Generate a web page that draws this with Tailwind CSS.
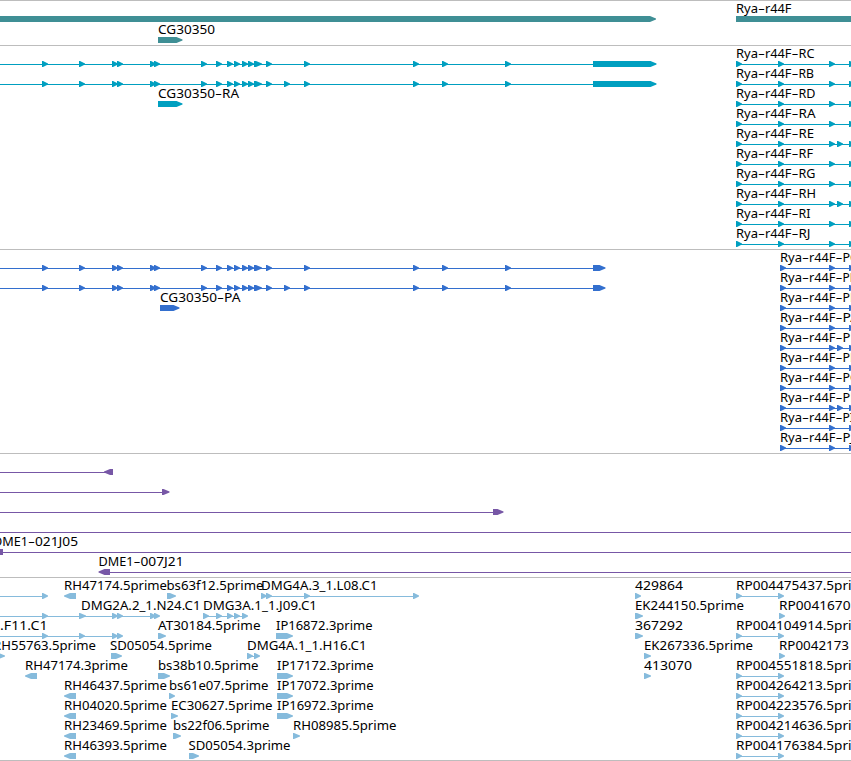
<!DOCTYPE html>
<html lang="en">
<head>
    <meta charset="UTF-8">
    <meta name="viewport" content="width=device-width, initial-scale=1.0">
    <title>Genome Browser</title>
    <script src="https://cdn.jsdelivr.net/npm/@tailwindcss/browser@4"></script>
</head>
<body class="bg-white overflow-hidden">
    <main class="flex flex-col w-full h-[761px] overflow-hidden border-b border-[#bdbdbd] font-['Noto_Sans','DejaVu_Sans',sans-serif] text-[12px] text-black">
        <!-- Genes -->
        <section id="genes" class="h-[45px] shrink-0 border-t border-[#bdbdbd] text-[#3f8f95]"></section>
        <!-- Transcripts -->
        <section id="transcripts" class="h-[204px] shrink-0 border-t border-[#bdbdbd] text-[#009fc0]"></section>
        <!-- Proteins -->
        <section id="proteins" class="h-[204px] shrink-0 border-t border-[#bdbdbd] text-[#336fce]"></section>
        <!-- BACs -->
        <section id="bacs" class="h-[124px] shrink-0 border-t border-[#bdbdbd] text-[#7757a6]"></section>
        <!-- ESTs -->
        <section id="ests" class="h-[183px] shrink-0 border-t border-[#bdbdbd] text-[#86bbdc]"></section>
    </main>

    <script>
        // Every row is { labels: [text, x, width(s)], lines: [x1, x2], arrows: [x1, x2, 'left'?] }
        // A label with dashes takes one width for each part between them
        const exons = [42, 79, 112, 117, 150, 154, 201, 216, 227, 234, 242, 248, [254, 262], 266, 304, 413, 442, 505];
        const exonsLong = exons.concat([284]);

        const genes = [
            { labels: [['Rya-r44F', 736, [22, 26.5]]], arrows: [[-10, 656], [736, 870]] },
            { labels: [['CG30350', 158, 57]], arrows: [[158, 182.5]] }
        ];

        // Rya-r44F isoforms: letter, width of the last label part
        const isoforms = [['C', 16], ['B', 15.5], ['D', 17], ['A', 17], ['E', 15.5], ['F', 14.5], ['G', 17], ['H', 17.5], ['I', 12], ['J', 12]];

        const transcripts = isoforms.map(([c, w]) => ({
            labels: [['Rya-r44F-R' + c, 736, [22, 26.5, w]]],
            lines: [[736, 851]],
            arrows: [736, 778, 829, 849].concat(c === 'E' || c === 'H' ? [837] : [])
        }));
        const proteins = isoforms.map(([c, w]) => ({
            labels: [['Rya-r44F-P' + c, 780, [22, 26.5, w - 0.5]]],
            lines: [[780, 851]],
            arrows: [780, 829, 849].concat(c === 'E' || c === 'H' ? [837] : [])
        }));
        [exons, exonsLong].forEach((list, i) => {
            transcripts[i].lines.push([0, 593]);
            transcripts[i].arrows.push(...list, [593, 656.5]);
            proteins[i].lines.push([0, 593]);
            proteins[i].arrows.push(...list, [593, 605.5]);
        });
        transcripts[2].labels.push(['CG30350-RA', 158, [57, 17]]);
        transcripts[2].arrows.push([158, 182.5]);
        proteins[2].labels.push(['CG30350-PA', 160, [57, 16.5]]);
        proteins[2].arrows.push([160, 179.5]);

        const bacs = [
            { lines: [[0, 106]], arrows: [[104, 113, 'left']] },
            { lines: [[0, 163]], arrows: [[162, 169.5]] },
            { lines: [[0, 494]], arrows: [[493, 503.5]] },
            { lines: [[0, 851]] },
            { labels: [['DME1-021J05', -7, [35, 43]]], lines: [[0, 851]], arrows: [[-8, 3, 'left']] },
            { labels: [['DME1-007J21', 98.5, [35, 43]]], lines: [[108, 851]], arrows: [[98.5, 110, 'left']] }
        ];

        const ests = [
            {
                labels: [['RH47174.5prime', 64, 103], ['bs63f12.5prime', 166.5, 97], ['DMG4A.3_1.L08.C1', 261, 116.5], ['429864', 635, 48], ['RP004475437.5prime', 736, 136]],
                lines: [[0, 42], [261, 413], [736, 778]],
                arrows: [42, [64, 76, 'left'], [167, 176], 261, 266, 304, 413, [635, 641], 736, 778]
            },
            {
                labels: [['DMG2A.2_1.N24.C1', 81, 119.5], ['DMG3A.1_1.J09.C1', 203, 114], ['EK244150.5prime', 635, 109], ['RP0041670', 779, 71.5]],
                lines: [[0, 154], [203, 242]],
                arrows: [42, [79, 86], 112, 117, 150, 154, 203, 216, 227, 234, 242, [635, 643], 779]
            },
            {
                labels: [['.F11.C1', 0, 47.5], ['AT30184.5prime', 158, 102.5], ['IP16872.3prime', 276, 96.5], ['367292', 635, 48], ['RP004104914.5prime', 736, 136]],
                lines: [[0, 117], [736, 778]],
                arrows: [42, 79, 112, 117, [158, 166], [276, 293], [635, 643], 736, 778]
            },
            {
                labels: [['RH55763.5prime', -7, 103], ['SD05054.5prime', 110, 102], ['DMG4A.1_1.H16.C1', 247, 119.5], ['EK267336.5prime', 644, 109], ['RP0042173', 779, 70]],
                lines: [[250, 256]],
                arrows: [[-6, 5], [111, 122], [247, 253], 254, [644, 651], 779]
            },
            {
                labels: [['RH47174.3prime', 25, 103], ['bs38b10.5prime', 158, 100.5], ['IP17172.3prime', 277, 96.5], ['413070', 644, 48], ['RP004551818.5prime', 736, 136]],
                lines: [[736, 778]],
                arrows: [[25, 37, 'left'], [158, 170], [277, 293], [644, 651], 736, 778]
            },
            {
                labels: [['RH46437.5prime', 64, 103], ['bs61e07.5prime', 169, 99.5], ['IP17072.3prime', 277, 96.5], ['RP004264213.5prime', 736, 136]],
                lines: [[736, 778]],
                arrows: [[64, 76, 'left'], 169, [277, 293], 736, 778]
            },
            {
                labels: [['RH04020.5prime', 64, 103], ['EC30627.5prime', 171, 101.5], ['IP16972.3prime', 277, 96.5], ['RP004223576.5prime', 736, 136]],
                lines: [[736, 778]],
                arrows: [[64, 76, 'left'], [171, 178], [277, 293], 736, 778]
            },
            {
                labels: [['RH23469.5prime', 64, 103], ['bs22f06.5prime', 173, 96.5], ['RH08985.5prime', 293, 103.5], ['RP004214636.5prime', 736, 136]],
                lines: [[736, 778]],
                arrows: [[64, 76, 'left'], [173, 181], [293, 300], 736, 778]
            },
            {
                labels: [['RH46393.5prime', 64, 103], ['SD05054.3prime', 188.5, 102], ['RP004176384.5prime', 736, 136]],
                lines: [[736, 778]],
                arrows: [[64, 76, 'left'], [189, 199], 736, 778]
            }
        ];

        // Glyphs are 6px high and end in a pointed tip
        function arrow(a) {
            const [x1, x2, dir] = Array.isArray(a) ? a : [a, a + 6];
            const tip = Math.min(6, x2 - x1 - 1);
            const points = dir === 'left'
                ? `${x2},15 ${x2},21 ${x1 + tip},21 ${x1},18.5 ${x1},17.5 ${x1 + tip},15`
                : `${x1},15 ${x1},21 ${x2 - tip},21 ${x2},18.5 ${x2},17.5 ${x2 - tip},15`;
            return `<polygon points="${points}" fill="currentColor"/>`;
        }

        // Dashes are drawn 7px wide
        function label([text, x, width]) {
            const widths = [].concat(width);
            const parts = text.split('-').map((part, i) => {
                const dash = i ? `<tspan x="${x}" textLength="7" lengthAdjust="spacingAndGlyphs">-</tspan>` : '';
                if (i) x += 7;
                const word = `<tspan x="${x}" textLength="${widths[i]}" lengthAdjust="spacingAndGlyphs">${part}</tspan>`;
                x += widths[i];
                return dash + word;
            });
            return `<text y="12" class="fill-black">${parts.join('')}</text>`;
        }

        function drawTrack(id, rows, rowClass) {
            document.getElementById(id).innerHTML = rows.map(row => `
                <svg class="${rowClass}">
                    ${(row.lines || []).map(([a, b]) => `<rect x="${a}" y="18" width="${b - a}" height="1" fill="currentColor"/>`).join('')}
                    ${(row.arrows || []).map(arrow).join('')}
                    ${(row.labels || []).map(label).join('')}
                </svg>`).join('');
        }

        drawTrack('genes', genes, 'block w-full h-[21px] overflow-visible');
        drawTrack('transcripts', transcripts, 'block w-full h-5 overflow-visible');
        drawTrack('proteins', proteins, 'block w-full h-5 overflow-visible');
        drawTrack('bacs', bacs, 'block w-full h-5 overflow-visible');
        drawTrack('ests', ests, 'block w-full h-5 overflow-visible');
    </script>
</body>
</html>
